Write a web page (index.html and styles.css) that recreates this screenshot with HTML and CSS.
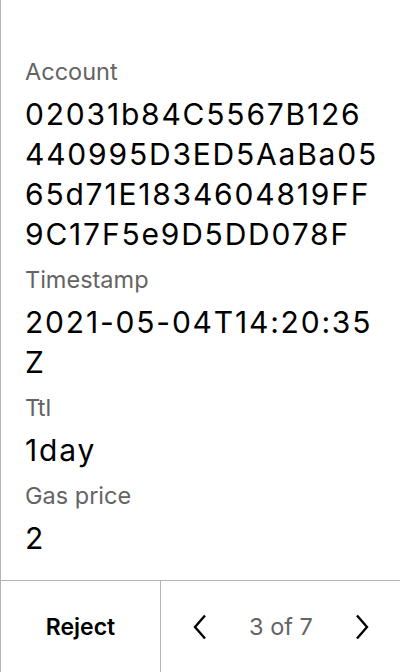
FILE: index.html
```html
<!DOCTYPE html>
<html>
<head>
<meta charset="utf-8">
<link rel="stylesheet" href="styles.css">
</head>
<body>
<div class="screen">
  <main class="content">
    <div class="field">
      <div class="label">Account</div>
      <div class="value">02031b84C5567B126440995D3ED5AaBa0565d71E1834604819FF9C17F5e9D5DD078F</div>
    </div>
    <div class="field">
      <div class="label">Timestamp</div>
      <div class="value">2021-05-04T14:20:35Z</div>
    </div>
    <div class="field">
      <div class="label">Ttl</div>
      <div class="value">1day</div>
    </div>
    <div class="field">
      <div class="label">Gas price</div>
      <div class="value">2</div>
    </div>
  </main>
  <footer class="footer">
    <div class="reject">Reject</div>
    <div class="pager">
      <svg class="chev" width="14" height="26" viewBox="0 0 14 26"><path d="M12 1.5 L2 13 L12 24.5" fill="none" stroke="#000" stroke-width="2.4"/></svg>
      <span class="count">3 of 7</span>
      <svg class="chev" width="14" height="26" viewBox="0 0 14 26"><path d="M2 1.5 L12 13 L2 24.5" fill="none" stroke="#000" stroke-width="2.4"/></svg>
    </div>
  </footer>
</div>
</body>
</html>
```

FILE: styles.css
```css
html, body {
  margin: 0;
  padding: 0;
  background: #fff;
}
.screen {
  width: 400px;
  height: 672px;
  box-sizing: border-box;
  border-left: 1px solid #b3b3b3;
  display: flex;
  flex-direction: column;
  font-family: Inter, "Noto Sans", sans-serif;
  color: #000;
}
.content {
  flex: 1;
  padding: 58px 20px 0 24px;
  display: flex;
  flex-direction: column;
  gap: 12px;
}
.field {
  display: flex;
  flex-direction: column;
  gap: 8px;
}
.label {
  font-size: 23.5px;
  line-height: 28px;
  color: #646464;
}
.value {
  font-size: 30px;
  line-height: 40px;
  letter-spacing: 1.8px;
  word-break: break-all;
}
.footer {
  height: 91px;
  border-top: 1px solid #b3b3b3;
  display: flex;
}
.reject {
  width: 159px;
  border-right: 1px solid #b3b3b3;
  display: flex;
  align-items: center;
  justify-content: center;
  font-size: 23px;
  font-weight: 600;
}
.pager {
  flex: 1;
  display: flex;
  align-items: center;
  justify-content: space-between;
  padding: 0 31px 0 32px;
}
.count {
  font-size: 23.5px;
  color: #646464;
}
.chev {
  display: block;
}
```
